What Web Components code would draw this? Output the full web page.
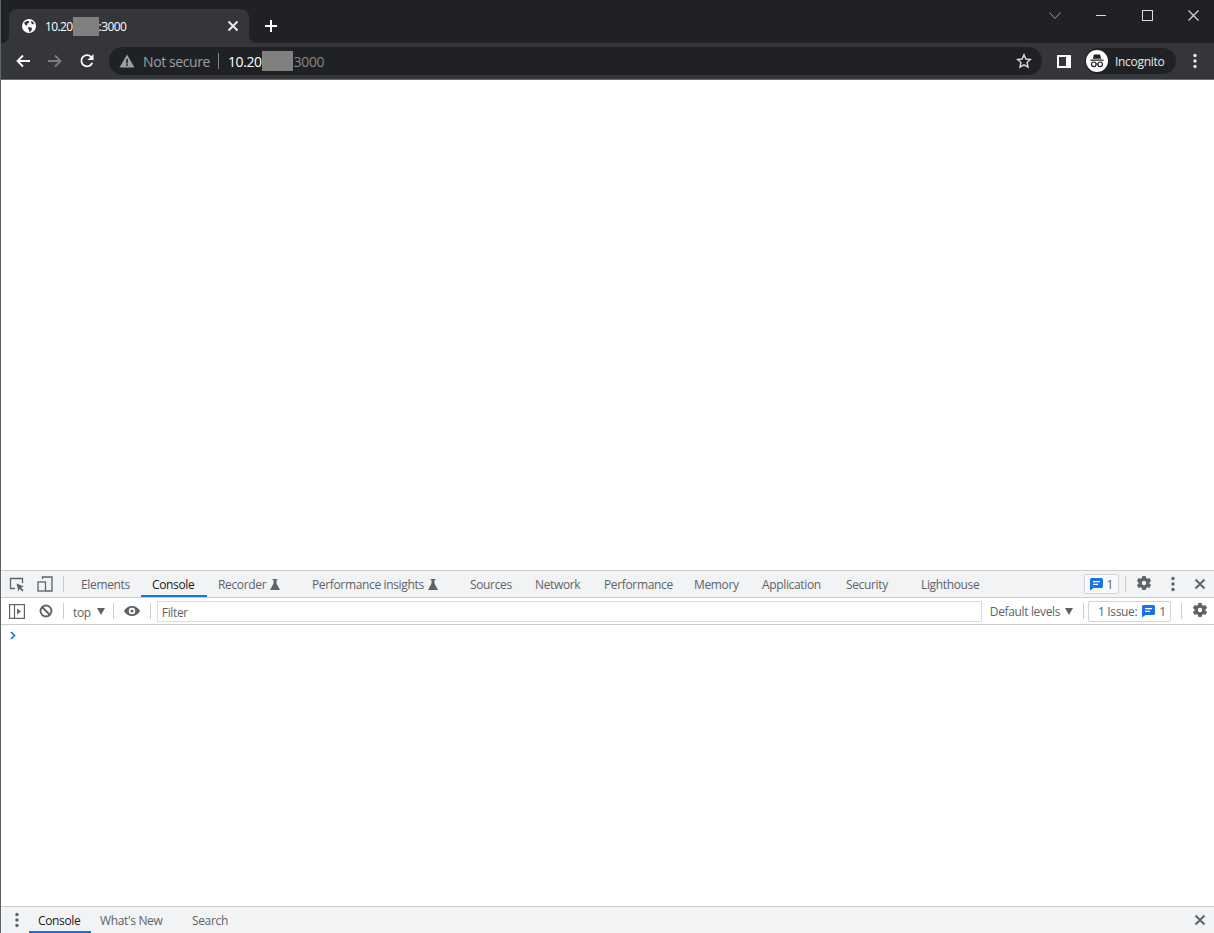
<!DOCTYPE html>
<html>
<head>
<meta charset="utf-8">
<title>10.20:3000</title>
<style>
  html, body { margin: 0; height: 100%; background: #fff; }
  body { font-family: "Open Sans", "Liberation Sans", sans-serif; overflow: hidden; }
</style>
</head>
<body>
<browser-window>
  <devtools-panel></devtools-panel>
</browser-window>

<script>
const ICONS = {
  globe: `<circle cx="8" cy="8" r="7" fill="currentColor"/><path fill="#35363a" d="M3 4.500 6 3l2.200.2L8 5 6.400 5.600 6 7.500 4.400 7.200zM7.500 9l3 .6.6 1.600-1.600 2.200-1.200.6-.4-2.400L7 11zM10.600 2.800l2.200 2-.2 1.600-1.600-.4-1-1.600z"/>`,
  close: `<path d="M3.500 3.500l9 9M12.500 3.500l-9 9" stroke="currentColor" stroke-width="2" fill="none"/>`,
  closeThin: `<path d="M.5.5l10 10M10.500.5l-10 10" stroke="currentColor" stroke-width="1.100" fill="none"/>`,
  plus: `<path d="M8 2v12M2 8h12" stroke="currentColor" stroke-width="2" fill="none"/>`,
  chevron: `<path d="M.5.5l5.500 6 5.500-6" stroke="currentColor" stroke-width="1" fill="none"/>`,
  minimize: `<path d="M0 5.500h10" stroke="currentColor" stroke-width="1"/>`,
  maximize: `<rect x=".5" y=".5" width="10" height="10" stroke="currentColor" stroke-width="1" fill="none"/>`,
  back: `<path d="M15 8H2.500M8 2.500 2.500 8 8 13.500" stroke="currentColor" stroke-width="1.800" fill="none"/>`,
  forward: `<path d="M1 8h12.500M8 2.500 13.500 8 8 13.500" stroke="currentColor" stroke-width="1.800" fill="none"/>`,
  reload: `<path d="M13.200 9.800A5.600 5.600 0 1 1 12 3.800" stroke="currentColor" stroke-width="1.800" fill="none"/><path d="M14.500 1v6h-6z" fill="currentColor"/>`,
  warning: `<path fill="currentColor" d="M8 1.500 15.500 14.500H.5zM7.200 6v4.500h1.600V6zM7.200 11.300v1.600h1.600v-1.600z" fill-rule="evenodd"/>`,
  star: `<path d="M8 1.800l1.900 4.200 4.600.5-3.400 3.100.9 4.500L8 11.800l-4 2.300.9-4.500L1.500 6.500l4.600-.5z" stroke="currentColor" stroke-width="1.400" fill="none"/>`,
  sidepanel: `<path fill="currentColor" fill-rule="evenodd" d="M0 0h14v13H0zM2 2v9h7V2z"/>`,
  incognito: `<circle cx="11" cy="11" r="11" fill="#fff"/><path fill="#202124" d="M8 4.500h6l1.200 4.200H6.800zM4.500 9.500h13v1.200h-13z"/><g fill="none" stroke="#202124" stroke-width="1.200"><circle cx="7.800" cy="14.300" r="2.300"/><circle cx="14.200" cy="14.300" r="2.300"/><path d="M10 14h2"/></g>`,
  dots: `<circle cx="2" cy="2.500" r="1.700"/><circle cx="2" cy="8" r="1.700"/><circle cx="2" cy="13.500" r="1.700"/>`,
  inspect: `<path d="M6 11.500H1.500V1.500h12V6" stroke="currentColor" stroke-width="1.300" fill="none"/><path fill="currentColor" d="M7.500 6.500 15 9.500l-3 1 2.500 2.800-1.200 1.200-2.600-2.800-1.200 2.800z"/>`,
  device: `<path d="M5.500 3V1h9.500v14H9" stroke="currentColor" stroke-width="1.300" fill="none"/><rect x="1" y="6" width="7.500" height="9" stroke="currentColor" stroke-width="1.300" fill="none"/>`,
  flask: `<path fill="currentColor" d="M3.500 0h5v1H7.500v3.500L11 11H1l3.500-6.500V1h-1z"/>`,
  gear: `<path fill="currentColor" fill-rule="evenodd" d="M6.300 0h3.400l.4 2.100 1.300.7 2-.8 1.700 3-1.600 1.300v1.400l1.600 1.300-1.700 3-2-.8-1.300.7L9.700 14H6.300l-.4-2.100-1.300-.7-2 .8-1.700-3 1.600-1.300V6.300L.9 5l1.700-3 2 .8 1.300-.7zM8 4.800a2.200 2.200 0 1 0 0 4.400 2.200 2.200 0 0 0 0-4.400z"/>`,
  message: `<path fill="#1a73e8" d="M1.500 0h10A1.500 1.500 0 0 1 13 1.500v7A1.500 1.500 0 0 1 11.500 10H3.500L0 12.500v-11A1.500 1.500 0 0 1 1.500 0z"/><path fill="#fff" d="M3 3h7v1.300H3zM3 5.700h5V7H3z"/>`,
  sidebar: `<rect x=".6" y=".6" width="14.800" height="13.800" stroke="currentColor" stroke-width="1.200" fill="none"/><path d="M5.500 1v13" stroke="currentColor" stroke-width="1.200"/><path fill="currentColor" d="M8 4.500l4 3-4 3z"/>`,
  clear: `<circle cx="7" cy="7" r="5.500" stroke="currentColor" stroke-width="1.900" fill="none"/><path d="M3 3l8 8" stroke="currentColor" stroke-width="1.900"/>`,
  eye: `<path fill="currentColor" fill-rule="evenodd" d="M8 0c3.600 0 6.700 2.100 8 5-1.300 2.900-4.400 5-8 5S1.300 7.900 0 5c1.300-2.900 4.400-5 8-5zm0 1.800a3.200 3.200 0 1 0 0 6.400 3.200 3.200 0 0 0 0-6.400zM8 3.500a1.500 1.500 0 1 1 0 3 1.500 1.500 0 0 1 0-3z"/>`,
  triangle: `<path fill="currentColor" d="M0 0h8L4 7z"/>`,
  prompt: `<path d="M1 1l3.500 3.500L1 8" stroke="currentColor" stroke-width="1.700" fill="none"/>`
};

class AppIcon extends HTMLElement {
  connectedCallback() {
    const name = this.getAttribute("name");
    const w = this.getAttribute("w") || 16;
    const h = this.getAttribute("h") || w;
    const vb = this.getAttribute("vb") || `0 0 ${w} ${h}`;
    this.attachShadow({mode: "open"});
    this.shadowRoot.innerHTML = `
      <style>
        :host { display: inline-flex; flex: none; fill: currentColor; }
        svg { display: block; }
      </style>
      <svg width="${w}" height="${h}" viewBox="${vb}">${ICONS[name]}</svg>
    `;
  }
}
customElements.define("app-icon", AppIcon);

class RedactBox extends HTMLElement {
  connectedCallback() {
    this.attachShadow({mode: "open"});
    this.shadowRoot.innerHTML = `
      <style>
        :host {
          display: inline-block; flex: none; background: #808080;
          width: ${this.getAttribute("w")}px; height: ${this.getAttribute("h")}px;
        }
      </style>
    `;
  }
}
customElements.define("redact-box", RedactBox);

class BrowserTabstrip extends HTMLElement {
  connectedCallback() {
    this.attachShadow({mode: "open"});
    this.shadowRoot.innerHTML = `
      <style>
        :host { display: flex; height: 43px; background: #202124; color: #fff; flex: none; }
        .tab {
          width: 240px; margin: 9px 0 0 8px; background: #35363a; border-radius: 8px 8px 0 0;
          display: flex; align-items: center; position: relative; box-sizing: border-box;
          padding: 0 8px 0 12px; font-size: 12px; color: #fff; letter-spacing: -.6px;
        }
        .tab::before, .tab::after {
          content: ""; position: absolute; bottom: 0; width: 8px; height: 8px;
        }
        .tab::before { left: -8px; background: radial-gradient(circle at 0 0, #202124 8px, #35363a 8.500px); }
        .tab::after { right: -8px; background: radial-gradient(circle at 100% 0, #202124 8px, #35363a 8.500px); }
        .title { display: flex; align-items: center; margin-left: 8px; flex: 1; }
        .close { color: #e8eaed; }
        .plus { margin: 9px 0 0 14px; align-self: center; color: #fff; }
        .controls { margin-left: auto; display: flex; align-self: flex-start; align-items: center; height: 30px; color: #dadce0; }
        .controls app-icon:nth-child(1) { margin-right: 35px; color: #9aa0a6; }
        .controls app-icon:nth-child(2) { margin-right: 36px; }
        .controls app-icon:nth-child(3) { margin-right: 35px; }
        .controls app-icon:nth-child(4) { margin-right: 15px; }
      </style>
      <div class="tab">
        <app-icon name="globe" w="16"></app-icon>
        <span class="title">10.20<redact-box w="26" h="19"></redact-box>:3000</span>
        <app-icon class="close" name="close" w="16"></app-icon>
      </div>
      <app-icon class="plus" name="plus" w="16"></app-icon>
      <div class="controls">
        <app-icon name="chevron" w="12" h="7"></app-icon>
        <app-icon name="minimize" w="10" h="11"></app-icon>
        <app-icon name="maximize" w="11"></app-icon>
        <app-icon name="closeThin" w="11"></app-icon>
      </div>
    `;
  }
}
customElements.define("browser-tabstrip", BrowserTabstrip);

class BrowserToolbar extends HTMLElement {
  connectedCallback() {
    this.attachShadow({mode: "open"});
    this.shadowRoot.innerHTML = `
      <style>
        :host {
          display: flex; align-items: center; height: 36px; background: #35363a; flex: none;
          box-sizing: content-box; border-bottom: 1px solid #6a6c70; color: #fff; padding-left: 14px;
          letter-spacing: -.4px;
        }
        .nav { margin-right: 16px; }
        .nav.off { color: #7b7d80; }
        .nav.last { margin-right: 0; }
        .omni {
          margin-left: 14px; width: 933px; height: 28px; border-radius: 14px; background: #202124;
          display: flex; align-items: center; box-sizing: border-box; padding: 0 10px; font-size: 14px;
          flex: none;
        }
        .warn { color: #9aa0a6; }
        .label { color: #9aa0a6; margin-left: 8px; }
        .sep { width: 1px; height: 16px; background: #80868b; margin: 0 9px 0 8px; }
        .url { display: flex; align-items: center; color: #fff; }
        .url span { color: #80868b; margin-left: 1px; }
        .star { margin-left: auto; color: #dadce0; }
        .panel { margin-left: 15px; }
        .pill {
          margin-left: 14px; width: 91px; height: 26px; border-radius: 13px; background: #202124; display: flex;
          align-items: center; box-sizing: border-box; padding-left: 1px; font-size: 12px; flex: none;
          color: #e8eaed; letter-spacing: -.3px;
        }
        .pill span { margin-left: 7px; }
        .menu { margin-left: 17px; color: #e8eaed; }
      </style>
      <app-icon class="nav" name="back" w="16"></app-icon>
      <app-icon class="nav off" name="forward" w="16"></app-icon>
      <app-icon class="nav last" name="reload" w="16"></app-icon>
      <div class="omni">
        <app-icon class="warn" name="warning" w="16"></app-icon>
        <span class="label">Not secure</span>
        <i class="sep"></i>
        <div class="url">10.20<redact-box w="31" h="20"></redact-box><span>3000</span></div>
        <app-icon class="star" name="star" w="16"></app-icon>
      </div>
      <app-icon class="panel" name="sidepanel" w="14" h="13"></app-icon>
      <div class="pill">
        <app-icon name="incognito" w="22"></app-icon>
        <span>Incognito</span>
      </div>
      <app-icon class="menu" name="dots" w="4" h="16"></app-icon>
    `;
  }
}
customElements.define("browser-toolbar", BrowserToolbar);

// one tab of the devtools strips, w is the full width with its padding
class DevtoolsTab extends HTMLElement {
  connectedCallback() {
    this.attachShadow({mode: "open"});
    this.shadowRoot.innerHTML = `
      <style>
        :host {
          display: flex; align-items: center; flex: none; box-sizing: border-box; height: 100%;
          width: ${this.getAttribute("w")}px; padding-left: ${this.getAttribute("pad") || 11}px;
          padding-top: 1px; color: #5f6368; font-size: 12px; white-space: nowrap; letter-spacing: -.35px;
        }
        :host([active]) { color: #202124; box-shadow: inset 0 -2px 0 #1a73e8; }
      </style>
      <slot></slot>
    `;
  }
}
customElements.define("devtools-tab", DevtoolsTab);

class DevtoolsMainTabs extends HTMLElement {
  connectedCallback() {
    this.attachShadow({mode: "open"});
    this.shadowRoot.innerHTML = `
      <style>
        :host {
          display: flex; align-items: center; height: 26px; background: #f1f3f4; flex: none;
          border-bottom: 1px solid #cbcdd1; padding-left: 8px; color: #5f6368;
        }
        .sep { width: 1px; height: 16px; background: #ccc; flex: none; }
        .flask { margin-left: 3px; }
        .badge {
          display: flex; align-items: center; justify-content: center; gap: 4px; width: 35px; height: 20px; box-sizing: border-box;
          border: 1px solid #d2d4d8; border-radius: 2px; font-size: 12px; margin-left: auto; background: #f8f9fa;
        }
      </style>
      <app-icon name="inspect" w="15"></app-icon>
      <app-icon name="device" w="16" style="margin-left:13px"></app-icon>
      <i class="sep" style="margin:0 6px 0 10px"></i>
      <devtools-tab w="71">Elements</devtools-tab>
      <devtools-tab w="66" active>Console</devtools-tab>
      <devtools-tab w="94">Recorder<app-icon class="flask" name="flask" w="12"></app-icon></devtools-tab>
      <devtools-tab w="158">Performance insights<app-icon class="flask" name="flask" w="12"></app-icon></devtools-tab>
      <devtools-tab w="65">Sources</devtools-tab>
      <devtools-tab w="69">Network</devtools-tab>
      <devtools-tab w="90">Performance</devtools-tab>
      <devtools-tab w="68">Memory</devtools-tab>
      <devtools-tab w="84">Application</devtools-tab>
      <devtools-tab w="75">Security</devtools-tab>
      <devtools-tab w="82">Lighthouse</devtools-tab>
      <div class="badge"><app-icon name="message" w="13"></app-icon>1</div>
      <i class="sep" style="margin:0 10px 0 6px"></i>
      <app-icon name="gear" w="16"></app-icon>
      <app-icon name="dots" w="4" h="16" style="margin-left:19px"></app-icon>
      <app-icon name="close" w="16" style="margin:0 6px 0 17px"></app-icon>
    `;
  }
}
customElements.define("devtools-main-tabs", DevtoolsMainTabs);

class ConsoleToolbar extends HTMLElement {
  connectedCallback() {
    this.attachShadow({mode: "open"});
    this.shadowRoot.innerHTML = `
      <style>
        :host {
          display: flex; align-items: center; height: 26px; background: #fff; flex: none;
          border-bottom: 1px solid #cbcdd1; padding-left: 8px; color: #5f6368; font-size: 12px;
          letter-spacing: -.35px; white-space: nowrap;
        }
        .sep { width: 1px; height: 16px; background: #ccc; flex: none; }
        .txt { padding-top: 1px; }
        .filter {
          width: 825px; height: 21px; border: 1px solid #dadce0; box-sizing: border-box; display: flex; align-items: center;
          padding: 2px 0 0 4px; color: #5f6368; flex: none;
        }
        .issues {
          width: 83px; height: 21px; box-sizing: border-box; border: 1px solid #d2d4d8; border-radius: 2px; display: flex;
          align-items: center; flex: none; margin-left: 4px; padding: 1px 0 0 9px;
        }
        .right { margin-left: auto; display: flex; align-items: center; padding-right: 6px; }
      </style>
      <app-icon name="sidebar" w="16" h="15"></app-icon>
      <app-icon name="clear" w="14" style="margin-left:14px"></app-icon>
      <i class="sep" style="margin:0 9px 0 10px"></i>
      <span class="txt" style="padding-top:2px">top</span>
      <app-icon name="triangle" w="8" h="7" style="margin-left:6px"></app-icon>
      <i class="sep" style="margin:0 10px 0 8px"></i>
      <app-icon name="eye" w="16" h="10"></app-icon>
      <i class="sep" style="margin:0 6px 0 10px"></i>
      <div class="filter">Filter</div>
      <span class="txt" style="margin-left:8px">Default levels</span>
      <div class="right">
        <app-icon name="triangle" w="8" h="7" style="margin-right:10px"></app-icon>
        <i class="sep"></i>
        <div class="issues">1 Issue:<app-icon name="message" w="13" style="margin:0 4px 0 5px"></app-icon>1</div>
        <i class="sep" style="margin:0 10px"></i>
        <app-icon name="gear" w="16"></app-icon>
      </div>
    `;
  }
}
customElements.define("console-toolbar", ConsoleToolbar);

class DrawerTabs extends HTMLElement {
  connectedCallback() {
    this.attachShadow({mode: "open"});
    this.shadowRoot.innerHTML = `
      <style>
        :host {
          display: flex; align-items: center; height: 26px; background: #f1f3f4; flex: none;
          border-top: 1px solid #cbcdd1; padding-left: 14px; color: #5f6368;
        }
      </style>
      <app-icon name="dots" w="4" h="16"></app-icon>
      <devtools-tab w="62" pad="9" active style="margin-left:10px">Console</devtools-tab>
      <devtools-tab w="92" pad="9">What's New</devtools-tab>
      <devtools-tab w="60" pad="9">Search</devtools-tab>
      <app-icon name="close" w="16" style="margin:0 6px 0 auto"></app-icon>
    `;
  }
}
customElements.define("drawer-tabs", DrawerTabs);

class DevtoolsPanel extends HTMLElement {
  connectedCallback() {
    this.attachShadow({mode: "open"});
    this.shadowRoot.innerHTML = `
      <style>
        :host {
          display: flex; flex-direction: column; height: 363px; flex: none; box-sizing: border-box;
          border-top: 1px solid #cbcdd1; background: #fff;
        }
        .console { flex: 1; display: flex; align-items: flex-start; padding: 6px 0 0 9px; color: #1a73e8; }
      </style>
      <devtools-main-tabs></devtools-main-tabs>
      <console-toolbar></console-toolbar>
      <div class="console"><app-icon name="prompt" w="6" h="9"></app-icon></div>
      <drawer-tabs></drawer-tabs>
    `;
  }
}
customElements.define("devtools-panel", DevtoolsPanel);

class BrowserWindow extends HTMLElement {
  connectedCallback() {
    this.attachShadow({mode: "open"});
    this.shadowRoot.innerHTML = `
      <style>
        :host {
          display: flex; flex-direction: column; height: 933px; box-sizing: border-box;
          border-left: 1px solid #5f6368;
        }
        .page { flex: 1; background: #fff; }
      </style>
      <browser-tabstrip></browser-tabstrip>
      <browser-toolbar></browser-toolbar>
      <div class="page"></div>
      <slot></slot>
    `;
  }
}
customElements.define("browser-window", BrowserWindow);
</script>
</body>
</html>
